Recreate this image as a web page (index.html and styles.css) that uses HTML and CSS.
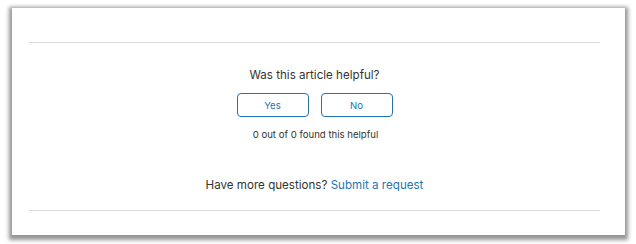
FILE: index.html
```html
<!DOCTYPE html>
<html>
<head>
<meta charset="utf-8">
<link rel="stylesheet" href="styles.css">
</head>
<body>
<div class="card">
  <hr class="rule">
  <div class="vote">
    <div class="vote-title">Was this article helpful?</div>
    <div class="vote-buttons">
      <button class="btn">Yes</button>
      <button class="btn">No</button>
    </div>
    <div class="vote-count">0 out of 0 found this helpful</div>
  </div>
  <div class="more">Have more questions? <a href="#" class="link">Submit a request</a></div>
  <hr class="rule">
</div>
</body>
</html>
```
FILE: styles.css
```css
html, body {
  margin: 0;
  padding: 0;
  background: #fff;
  width: 636px;
  height: 244px;
  overflow: hidden;
}
body {
  font-family: Inter, "Noto Sans", sans-serif;
  color: #333;
  padding-top: 8px;
  box-sizing: border-box;
}
.card {
  margin-left: 12px;
  width: 613px;
  height: 227px;
  background: #fff;
  box-shadow: 0 2px 4px 3px rgba(0,0,0,0.42);
  box-sizing: border-box;
  padding: 34px 25px 0 17px;
  display: flex;
  flex-direction: column;
}
.rule {
  margin: 0;
  border: 0;
  height: 1px;
  background: #dcdcdc;
}
.vote {
  display: flex;
  flex-direction: column;
  align-items: center;
  margin-top: 22px;
}
.vote-title {
  font-size: 11.6px;
  line-height: 20px;
}
.vote-buttons {
  display: flex;
  gap: 12px;
  margin-top: 8px;
}
.btn {
  width: 72px;
  height: 24px;
  border: 1px solid #1f73b7;
  border-radius: 4px;
  background: #fff;
  color: #1f73b7;
  font-family: inherit;
  font-size: 9.6px;
  padding: 0;
}
.vote-count {
  font-size: 9.6px;
  line-height: 16px;
  margin-top: 10px;
  margin-left: 2px;
}
.more {
  text-align: center;
  font-size: 11.6px;
  line-height: 20px;
  margin-top: 32px;
  margin-bottom: 15px;
}
.link {
  color: #1f73b7;
  text-decoration: none;
}
```
